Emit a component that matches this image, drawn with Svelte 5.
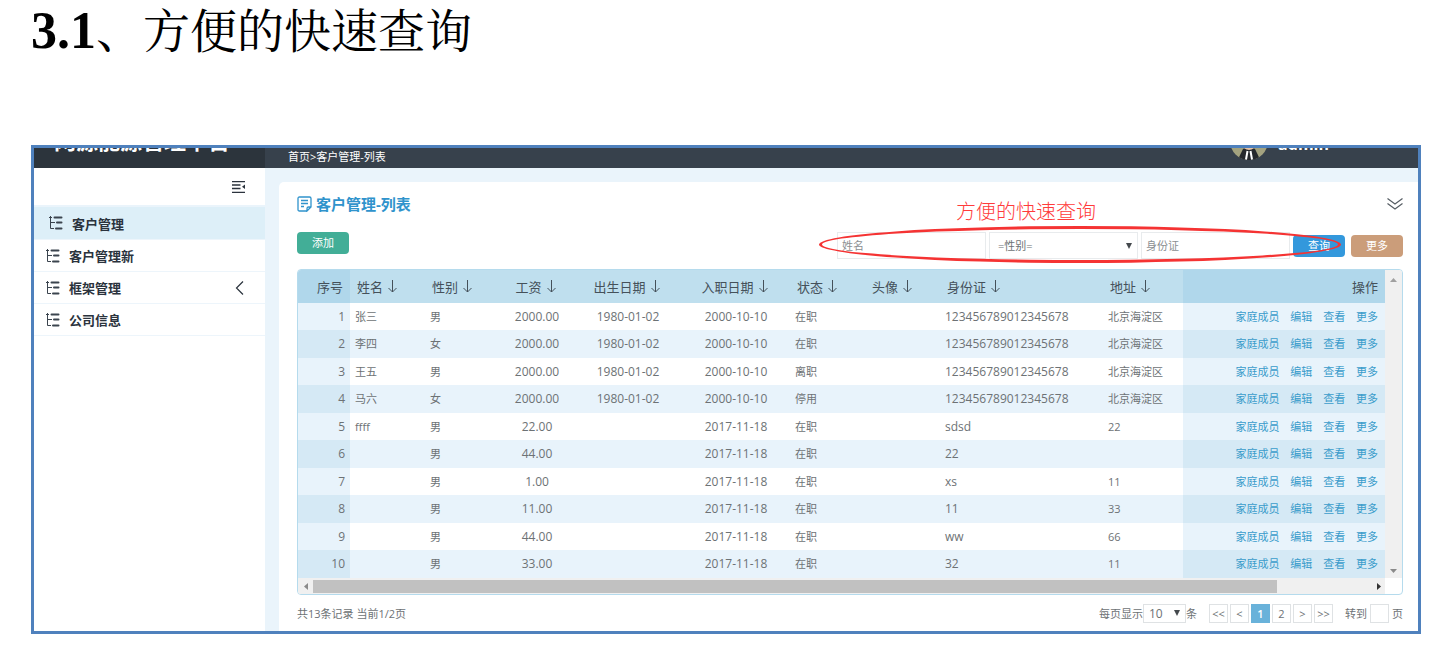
<style>
    :global(body) {
        background: #ffffff;
    }

    main {
        padding: 0 12px 16px 31px;
        font-family: "Open Sans", "Noto Sans CJK SC", sans-serif;
        font-size: 11px;
        color: #6d7275;
    }

    h1, h2, p, ul {
        margin: 0;
        padding: 0;
    }

    h1 {
        height: 64px;
        margin-bottom: 81px;
        font-family: "Liberation Serif", "Noto Serif CJK SC", "Noto Sans CJK SC", serif;
        font-size: 47px;
        line-height: 62px;
        font-weight: 400;
        color: #000000;
    }

    h1 strong {
        font-size: 52px;
        font-weight: 700;
    }

    button, input, select {
        box-sizing: border-box;
        margin: 0;
        font-family: inherit;
        font-size: 11px;
        color: inherit;
    }

    a {
        color: inherit;
        text-decoration: none;
    }

    svg {
        display: block;
        fill: none;
        flex: none;
    }

    .frame {
        border: 3px solid #4f81bd;
        display: grid;
        grid-template-columns: 231px 1fr;
        background: #eaf4fb;
    }

    .logo, .topbar {
        height: 20px;
        box-sizing: border-box;
        overflow: hidden;
        display: flex;
        align-items: flex-end;
        color: #ffffff;
    }

    .logo {
        background: #2c343c;
        padding: 0 0 16px 20px;
        font-size: 22px;
        line-height: 24px;
        font-weight: 700;
        white-space: nowrap;
    }

    .topbar {
        background: #37414c;
        padding: 0 89px 0 23px;
    }

    .crumb {
        flex: 1;
        line-height: 16px;
        padding-bottom: 3px;
    }

    .avatar {
        width: 38px;
        height: 38px;
        margin: 0 10px 8px 0;
    }

    .user {
        font-size: 16px;
        line-height: 20px;
        font-weight: 700;
        padding-bottom: 14px;
    }

    .sidebar {
        background: #ffffff;
        color: #2b333d;
    }

    .fold {
        height: 39px;
        box-sizing: border-box;
        border-bottom: 2px solid #eaf4fb;
        display: flex;
        align-items: center;
        justify-content: flex-end;
        padding-right: 20px;
    }

    .icon-button {
        border: 0;
        padding: 0;
        background: none;
    }

    .sidebar ul {
        list-style: none;
    }

    .sidebar li a {
        height: 32px;
        box-sizing: border-box;
        border-bottom: 1px solid #edf5fb;
        display: flex;
        align-items: center;
        gap: 9px;
        padding: 0 20px 0 12px;
        font-size: 13px;
        font-weight: 700;
    }

    .sidebar li a.active {
        height: 33px;
        padding-left: 15px;
        background: #ddeff8;
    }

    .sidebar span {
        flex: 1;
    }

    .content {
        padding: 14px 0 0 14px;
    }

    .card {
        background: #ffffff;
        border-top-left-radius: 5px;
        padding: 10px 15px 8px 18px;
    }

    .title {
        height: 24px;
        display: flex;
        align-items: center;
        gap: 4px;
        color: #2f93cc;
    }

    .title h2 {
        flex: 1;
        font-size: 15px;
        line-height: 24px;
        font-weight: 700;
    }

    .title .icon-button {
        color: #555c63;
    }

    .toolbar {
        margin-top: 16px;
        display: flex;
        justify-content: space-between;
    }

    .btn {
        width: 52px;
        height: 22px;
        border: 0;
        border-radius: 4px;
        padding: 0;
        color: #ffffff;
        line-height: 22px;
    }

    .add {
        background: #42ae97;
    }

    .query {
        background: #3398dc;
        margin-right: 3px;
    }

    .more {
        background: #cb9d7a;
    }

    .filters {
        position: relative;
        display: flex;
        align-items: center;
        gap: 3px;
    }

    .filters input, .filters select {
        width: 149px;
        height: 27px;
        border: 1px solid #e8ebed;
        padding: 0 4px;
        background: #ffffff;
    }

    .filters input::placeholder {
        color: #8b8f92;
        opacity: 1;
    }

    .select {
        display: grid;
        align-items: center;
    }

    .select > * {
        grid-area: 1 / 1;
    }

    .select select {
        appearance: none;
        border-radius: 0;
    }

    .filters .select select {
        padding-left: 8px;
    }

    .select svg {
        justify-self: end;
        margin-right: 6px;
        pointer-events: none;
    }

    .note {
        position: absolute;
        top: -33px;
        left: 119px;
        font-size: 20px;
        line-height: 26px;
        font-weight: 300;
        color: #ff3b3b;
        white-space: nowrap;
    }

    .ring {
        position: absolute;
        left: -18px;
        right: 62px;
        top: -6px;
        bottom: -4px;
        box-sizing: border-box;
        border: 3px solid #f53333;
        border-radius: 50%;
        pointer-events: none;
    }

    .grid {
        margin-top: 10px;
        border: 1px solid #b5dbed;
        border-radius: 4px;
        overflow: hidden;
        display: grid;
        grid-template-columns: 1fr 17px;
    }

    table {
        width: 100%;
        table-layout: fixed;
        border-collapse: collapse;
    }

    th {
        height: 33px;
        padding: 0;
        background: #bfdfee;
        color: #45515a;
        font-size: 13px;
        line-height: 20px;
        font-weight: 400;
        text-align: left;
        white-space: nowrap;
    }

    th button {
        border: 0;
        padding: 0 0 0 7px;
        background: none;
        font-size: 13px;
        font-weight: 400;
        display: inline-flex;
        align-items: center;
        gap: 5px;
    }

    td {
        height: 27px;
        padding: 0 0 0 5px;
        line-height: 18px;
        white-space: nowrap;
    }

    tr:nth-child(even) td {
        height: 28px;
        background: #e8f3fb;
    }

    th.mid, td.mid {
        text-align: center;
        padding: 0;
    }

    th.mid button {
        padding: 0 3px 0 0;
    }

    td.num {
        font-size: 12px;
    }

    th.seq, th.ops {
        background: #b0d7eb;
        text-align: right;
        padding-right: 7px;
    }

    td.seq, td.ops {
        background: #e8f3fb;
        text-align: right;
        padding-right: 7px;
    }

    td.seq {
        padding-right: 5px;
    }

    tr:nth-child(even) td.seq, tr:nth-child(even) td.ops {
        background: #d5e9f5;
    }

    .ops a {
        margin-left: 8px;
        color: #3a9ccb;
    }

    .vbar, .hbar {
        background: #f0f0f0;
        display: flex;
        justify-content: space-between;
        align-items: center;
    }

    .vbar {
        flex-direction: column;
        padding: 8px 0 5px;
    }

    .hbar {
        height: 16px;
        padding: 0 4px 0 6px;
    }

    .track {
        flex: 1;
        margin: 0 5px;
    }

    .thumb {
        height: 13px;
        background: #c1c1c1;
    }

    .foot {
        margin-top: 8px;
        height: 20px;
        display: flex;
        align-items: center;
        justify-content: space-between;
    }

    .pager, .pages, .pager label {
        display: flex;
        align-items: center;
    }

    .pages {
        gap: 2px;
        margin: 0 12px;
    }

    .pages button, .pager input, .pager select {
        height: 19px;
        border: 1px solid #dfe2e4;
        padding: 0;
        background: #ffffff;
    }

    .pages button {
        width: 19px;
        line-height: 17px;
        white-space: nowrap;
    }

    .pages button.current {
        background: #69b2da;
        border-color: #69b2da;
        color: #ffffff;
        font-weight: 600;
    }

    .pager select {
        width: 43px;
        padding-left: 5px;
        font-size: 12px;
    }

    .pager input {
        width: 19px;
        margin: 0 3px;
    }
</style>

<script lang="ts">
    let name = "";
    let gender = "";
    let idCard = "";
    let pageSize = "10";
    let page = 1;
    let jumpTo = "";

    //how much of the table fits in the view, in percent
    const thumbWidth = 91;

    const menu = [
        {text: "客户管理", active: true, children: false},
        {text: "客户管理新", active: false, children: false},
        {text: "框架管理", active: false, children: true},
        {text: "公司信息", active: false, children: false},
    ];

    const columns = [
        {key: "name", title: "姓名", width: 75, style: ""},
        {key: "gender", title: "性别", width: 75, style: ""},
        {key: "salary", title: "工资", width: 74, style: "mid num"},
        {key: "birth", title: "出生日期", width: 108, style: "mid num"},
        {key: "entry", title: "入职日期", width: 108, style: "mid num"},
        {key: "status", title: "状态", width: 75, style: ""},
        {key: "photo", title: "头像", width: 75, style: ""},
        {key: "card", title: "身份证", width: 163, style: "num"},
        {key: "address", title: "地址", width: 80, style: ""},
    ];

    const id = "123456789012345678";
    const rows: Record<string, string>[] = [
        {name: "张三", gender: "男", salary: "2000.00", birth: "1980-01-02", entry: "2000-10-10", status: "在职", card: id, address: "北京海淀区"},
        {name: "李四", gender: "女", salary: "2000.00", birth: "1980-01-02", entry: "2000-10-10", status: "在职", card: id, address: "北京海淀区"},
        {name: "王五", gender: "男", salary: "2000.00", birth: "1980-01-02", entry: "2000-10-10", status: "离职", card: id, address: "北京海淀区"},
        {name: "马六", gender: "女", salary: "2000.00", birth: "1980-01-02", entry: "2000-10-10", status: "停用", card: id, address: "北京海淀区"},
        {name: "ffff", gender: "男", salary: "22.00", entry: "2017-11-18", status: "在职", card: "sdsd", address: "22"},
        {gender: "男", salary: "44.00", entry: "2017-11-18", status: "在职", card: "22"},
        {gender: "男", salary: "1.00", entry: "2017-11-18", status: "在职", card: "xs", address: "11"},
        {gender: "男", salary: "11.00", entry: "2017-11-18", status: "在职", card: "11", address: "33"},
        {gender: "男", salary: "44.00", entry: "2017-11-18", status: "在职", card: "ww", address: "66"},
        {gender: "男", salary: "33.00", entry: "2017-11-18", status: "在职", card: "32", address: "11"},
    ];

    const actions = ["家庭成员", "编辑", "查看", "更多"];

    function goTo(target: number) {
        page = Math.min(2, Math.max(1, target));
    }
</script>

<main>
    <h1><strong>3.1</strong>、方便的快速查询</h1>

    <div class="frame">
        <div class="logo">网源能源管理平台</div>
        <header class="topbar">
            <p class="crumb"><a href="#home">首页</a>&gt;客户管理-列表</p>
            <svg class="avatar" viewBox="0 0 38 38">
                <circle cx="19" cy="19" r="19" fill="#a3a27f"/>
                <path d="M9 35.2 L13 27 L19 24 L25 27 L29 35.2 A19 19 0 0 1 9 35.2Z" fill="#25282c"/>
                <path d="M10 22 Q19 34 28 22 V15 H10Z" fill="#e6c3a5"/>
                <path d="M17.5 29 L16 37.5 M20.5 29 L22 37.5" stroke="#ffffff" stroke-width="2"/>
            </svg>
            <span class="user">admin</span>
        </header>

        <nav class="sidebar">
            <div class="fold">
                <button class="icon-button" aria-label="收起">
                    <svg width="13" height="12" viewBox="0 0 13 12" stroke="#2b333d">
                        <path d="M0 .5H13M0 4H8.5M0 7.5H8.5M0 11.5H13" stroke-width="1.3"/>
                        <path d="M13 3.5V8L10 5.8Z" fill="#2b333d" stroke="none"/>
                    </svg>
                </button>
            </div>
            <ul>
                {#each menu as item}
                    <li>
                        <a href="#menu" class:active={item.active}>
                            <svg width="14" height="14" viewBox="0 0 14 14" stroke="#3b444e">
                                <path d="M1.5 0V12.5H5M1.5 6.5H6M0 1.5H3"/>
                                <path d="M5.5 1.5H12.5M8 6.5H12.5M7 12.5H12.5" stroke-width="2" stroke-linecap="round"/>
                            </svg>
                            <span>{item.text}</span>
                            {#if item.children}
                                <svg width="10" height="14" viewBox="0 0 10 14" stroke="#2b333d">
                                    <path d="M8 .5L1.5 7L8 13.5" stroke-width="1.2"/>
                                </svg>
                            {/if}
                        </a>
                    </li>
                {/each}
            </ul>
        </nav>

        <div class="content">
            <section class="card">
                <div class="title">
                    <svg width="15" height="16" viewBox="0 0 15 16" stroke="#2f93cc" stroke-width="1.3">
                        <path d="M10 15H2.5Q1 15 1 13.5V2.5Q1 1 2.5 1H12.5Q14 1 14 2.5V11L10 15V12.5Q10 11 11.5 11H14"/>
                        <path d="M4 4.5H11M4 7.5H11M4 10.5H7"/>
                    </svg>
                    <h2>客户管理-列表</h2>
                    <button class="icon-button" aria-label="展开">
                        <svg width="16" height="12" viewBox="0 0 16 12" stroke="#555c63">
                            <path d="M.5 .5L8 6L15.5 .5M.5 5.5L8 11L15.5 5.5" stroke-width="1.2"/>
                        </svg>
                    </button>
                </div>

                <div class="toolbar">
                    <button class="btn add">添加</button>
                    <div class="filters">
                        <input aria-label="姓名" placeholder="姓名" bind:value={name}/>
                        <div class="select">
                            <select aria-label="性别" bind:value={gender}>
                                <option value="">=性别=</option>
                                <option value="男">男</option>
                                <option value="女">女</option>
                            </select>
                            <svg width="6" height="6" viewBox="0 0 6 6"><path d="M0 0H6L3 6Z" fill="#44494d"/></svg>
                        </div>
                        <input aria-label="身份证" placeholder="身份证" bind:value={idCard}/>
                        <button class="btn query">查询</button>
                        <button class="btn more">更多</button>
                        <p class="note">方便的快速查询</p>
                        <div class="ring"></div>
                    </div>
                </div>

                <div class="grid">
                    <table>
                        <colgroup>
                            <col style:width="{52 / 10.87}%"/>
                            {#each columns as column}
                                <col style:width="{column.width / 10.87}%"/>
                            {/each}
                            <col/>
                        </colgroup>
                        <thead>
                            <tr>
                                <th class="seq">序号</th>
                                {#each columns as column}
                                    <th class={column.style}>
                                        <button>
                                            {column.title}
                                            <svg width="9" height="13" viewBox="0 0 9 13" stroke="#45515a">
                                                <path d="M4.5 0V12M.5 8L4.5 12L8.5 8"/>
                                            </svg>
                                        </button>
                                    </th>
                                {/each}
                                <th class="ops">操作</th>
                            </tr>
                        </thead>
                        <tbody>
                            {#each rows as row, i}
                                <tr>
                                    <td class="seq num">{i + 1}</td>
                                    {#each columns as column}
                                        <td class={column.style}>{row[column.key] ?? ""}</td>
                                    {/each}
                                    <td class="ops">
                                        {#each actions as action}
                                            <a href="#row">{action}</a>{" "}
                                        {/each}
                                    </td>
                                </tr>
                            {/each}
                        </tbody>
                    </table>
                    <div class="vbar">
                        <svg width="7" height="4" viewBox="0 0 7 4"><path d="M0 4H7L3.5 0Z" fill="#a0a0a0"/></svg>
                        <svg width="7" height="4" viewBox="0 0 7 4"><path d="M0 0H7L3.5 4Z" fill="#8a8a8a"/></svg>
                    </div>
                    <div class="hbar">
                        <svg width="4" height="7" viewBox="0 0 4 7"><path d="M4 0V7L0 3.5Z" fill="#8a8a8a"/></svg>
                        <div class="track">
                            <div class="thumb" style:width="{thumbWidth}%"></div>
                        </div>
                        <svg width="4" height="7" viewBox="0 0 4 7"><path d="M0 0V7L4 3.5Z" fill="#333333"/></svg>
                    </div>
                </div>

                <div class="foot">
                    <p>共13条记录 当前{page}/2页</p>
                    <div class="pager">
                        <label for="page-size">每页显示</label>
                        <div class="select">
                            <select id="page-size" bind:value={pageSize}>
                                <option value="10">10</option>
                                <option value="20">20</option>
                            </select>
                            <svg width="6" height="6" viewBox="0 0 6 6"><path d="M0 0H6L3 6Z" fill="#44494d"/></svg>
                        </div>
                        条
                        <div class="pages">
                            <button on:click={() => goTo(1)}>&lt;&lt;</button>
                            <button on:click={() => goTo(page - 1)}>&lt;</button>
                            {#each [1, 2] as number}
                                <button class:current={page === number} on:click={() => goTo(number)}>{number}</button>
                            {/each}
                            <button on:click={() => goTo(page + 1)}>&gt;</button>
                            <button on:click={() => goTo(2)}>&gt;&gt;</button>
                        </div>
                        <label>转到<input bind:value={jumpTo}/>页</label>
                    </div>
                </div>
            </section>
        </div>
    </div>
</main>
